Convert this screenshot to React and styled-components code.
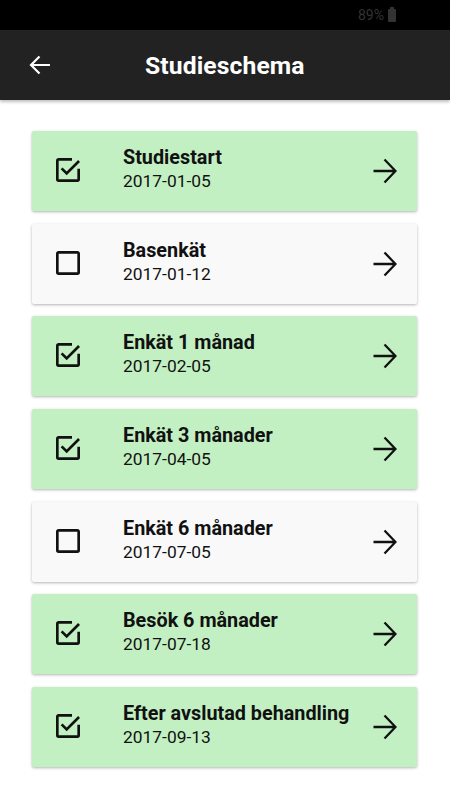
import React from 'react';
import styled, { createGlobalStyle } from 'styled-components';

const GlobalStyle = createGlobalStyle`
  html, body {
    margin: 0;
    padding: 0;
    background: #fff;
    font-family: Roboto, "Liberation Sans", sans-serif;
  }
`;

const Screen = styled.div`
  width: 450px;
  height: 800px;
  background: #fff;
  overflow: hidden;
`;

const StatusBar = styled.div`
  height: 30px;
  background: #000;
  display: flex;
  align-items: center;
  justify-content: flex-end;
  padding-right: 54px;
  gap: 4px;
  color: #333;
  font-size: 14px;
`;

const Battery = styled.span`
  position: relative;
  width: 8px;
  height: 13px;
  background: #333;
  border-radius: 1px;

  &::before {
    content: '';
    position: absolute;
    top: -2px;
    left: 2px;
    width: 4px;
    height: 2px;
    background: #333;
  }
`;

const AppBar = styled.header`
  height: 70px;
  background: #222;
  display: flex;
  align-items: center;
  box-shadow: 0 2px 3px rgba(0, 0, 0, 0.25);
  color: #fff;
`;

const BackButton = styled.div`
  width: 80px;
  display: flex;
  align-items: center;
  padding-left: 29px;
  box-sizing: border-box;
`;

const Title = styled.h1`
  margin: 0 0 0 65px;
  font-size: 24.7px;
  font-weight: 700;
  letter-spacing: 0.1px;
`;

const List = styled.div`
  display: flex;
  flex-direction: column;
  gap: 12.7px;
  padding: 31px 33px 0 32px;
`;

const Card = styled.div`
  height: 80px;
  display: flex;
  align-items: center;
  background: ${p => (p.$done ? '#c2f0c2' : '#f9f9f9')};
  border-radius: 2px;
  box-shadow: 0 1px 3px rgba(0, 0, 0, 0.3);
`;

const CheckCell = styled.div`
  width: 91px;
  display: flex;
  padding: 0 0 2px 20px;
  box-sizing: border-box;
`;

const Texts = styled.div`
  flex: 1;
  display: flex;
  flex-direction: column;
  padding-bottom: 4px;
  color: #111;
`;

const Name = styled.div`
  font-size: 19.8px;
  font-weight: 700;
  line-height: 24px;
`;

const DateText = styled.div`
  font-size: 17.4px;
  line-height: 22px;
`;

const ArrowCell = styled.div`
  display: flex;
  align-items: center;
  padding: 0 20px 0 8px;
`;

const CheckIcon = ({ done }) => (
  <svg width="32" height="32" viewBox="0 0 24 24" fill="#111">
    {done ? (
      <path d="M19,19H5V5H15V3H5C3.89,3 3,3.89 3,5V19A2,2 0 0,0 5,21H19A2,2 0 0,0 21,19V11H19M7.91,10.08L6.5,11.5L11,16L21,6L19.59,4.58L11,13.17L7.91,10.08Z" />
    ) : (
      <path d="M19,3H5C3.89,3 3,3.89 3,5V19A2,2 0 0,0 5,21H19A2,2 0 0,0 21,19V5C21,3.89 20.1,3 19,3M19,5V19H5V5H19Z" />
    )}
  </svg>
);

const Arrow = () => (
  <svg width="24" height="26" viewBox="0 0 24 26" fill="none" stroke="#111" strokeWidth="2.3">
    <path d="M0.5 13H22M11.5 1.5L22.5 13 11.5 24.5" />
  </svg>
);

const BackArrow = () => (
  <svg width="22" height="22" viewBox="0 0 22 22" fill="none" stroke="#fff" strokeWidth="2.2">
    <path d="M21 11H2M10.5 2.5L2 11l8.5 8.5" />
  </svg>
);

const items = [
  { name: 'Studiestart', date: '2017-01-05', done: true },
  { name: 'Basenkät', date: '2017-01-12', done: false },
  { name: 'Enkät 1 månad', date: '2017-02-05', done: true },
  { name: 'Enkät 3 månader', date: '2017-04-05', done: true },
  { name: 'Enkät 6 månader', date: '2017-07-05', done: false },
  { name: 'Besök 6 månader', date: '2017-07-18', done: true },
  { name: 'Efter avslutad behandling', date: '2017-09-13', done: true },
];

export default function App() {
  return (
    <Screen>
      <GlobalStyle />
      <StatusBar>
        <span>89%</span>
        <Battery />
      </StatusBar>
      <AppBar>
        <BackButton>
          <BackArrow />
        </BackButton>
        <Title>Studieschema</Title>
      </AppBar>
      <List>
        {items.map(item => (
          <Card key={item.name} $done={item.done}>
            <CheckCell>
              <CheckIcon done={item.done} />
            </CheckCell>
            <Texts>
              <Name>{item.name}</Name>
              <DateText>{item.date}</DateText>
            </Texts>
            <ArrowCell>
              <Arrow />
            </ArrowCell>
          </Card>
        ))}
      </List>
    </Screen>
  );
}
